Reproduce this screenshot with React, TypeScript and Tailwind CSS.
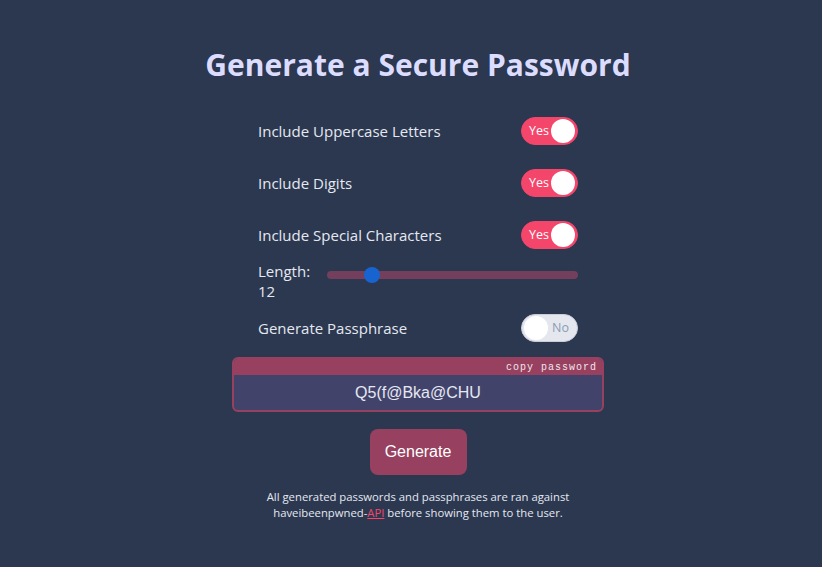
import React, { useState } from "react";

const FONT = { fontFamily: '"Open Sans", "Noto Sans", sans-serif' };

function Toggle({ on, onClick }: { on: boolean; onClick: () => void }) {
  return (
    <button
      onClick={onClick}
      className={`relative flex h-[28px] w-[57px] items-center rounded-full border ${
        on ? "border-[#f4456b] bg-[#f4456b]" : "border-[#c9cdd8] bg-[#e5e7ee]"
      }`}
    >
      {on ? (
        <>
          <span className="ml-[7px] text-[12.5px] leading-none text-white">Yes</span>
          <span className="ml-auto mr-[2px] h-[24px] w-[24px] rounded-full bg-white" />
        </>
      ) : (
        <>
          <span className="ml-[2px] h-[24px] w-[24px] rounded-full bg-white" />
          <span className="ml-auto mr-[8px] text-[12.5px] leading-none text-[#8a9bb5]">No</span>
        </>
      )}
    </button>
  );
}

export default function App() {
  const [upper, setUpper] = useState(true);
  const [digits, setDigits] = useState(true);
  const [special, setSpecial] = useState(true);
  const [phrase, setPhrase] = useState(false);
  const length = 12;
  const min = 6;
  const max = 44;
  const frac = (length - min) / (max - min);

  const rows = [
    { label: "Include Uppercase Letters", on: upper, set: () => setUpper(!upper) },
    { label: "Include Digits", on: digits, set: () => setDigits(!digits) },
    { label: "Include Special Characters", on: special, set: () => setSpecial(!special) },
  ];

  return (
    <div className="min-h-[567px] w-full bg-[#2b3850] text-[#e6e8f0]" style={FONT}>
      <div className="flex flex-col items-center pl-[14px] pt-[43px]">
        <h1 className="text-[30px] font-bold leading-[44px] text-[#dcdcff]">Generate a Secure Password</h1>

        <div className="mt-[30px] flex w-[320px] flex-col">
          {rows.map((r, i) => (
            <div key={r.label} className={`flex h-[28px] items-center justify-between ${i > 0 ? "mt-[24px]" : ""}`}>
              <span className="text-[15px]">{r.label}</span>
              <Toggle on={r.on} onClick={r.set} />
            </div>
          ))}

          <div className="mt-[12px] flex items-start">
            <div className="w-[69px] text-[15px] leading-[20px]">
              Length:
              <br />
              {length}
            </div>
            <div className="relative mt-[10px] h-[8px] flex-1 rounded-full bg-[#733f5d]">
              <span
                className="absolute top-1/2 h-[16px] w-[16px] -translate-x-1/2 -translate-y-1/2 rounded-full bg-[#1764d1]"
                style={{ left: `calc(8px + ${frac} * (100% - 16px))` }}
              />
            </div>
          </div>

          <div className="mt-[13px] flex h-[28px] items-center justify-between">
            <span className="text-[15px]">Generate Passphrase</span>
            <Toggle on={phrase} onClick={() => setPhrase(!phrase)} />
          </div>
        </div>

        <div className="mt-[15px] w-[372px] overflow-hidden rounded-[6px] border-2 border-[#97405f] bg-[#42436a]">
          <div
            className="flex h-[16px] items-center justify-end bg-[#97405f] pr-[5px] text-[10px] tracking-[1px] text-[#f0e6ec]"
            style={{ fontFamily: '"Liberation Mono", "DejaVu Sans Mono", monospace' }}
          >
            copy password
          </div>
          <div
            className="flex h-[35px] items-center justify-center text-[16px] text-[#e6e8f4]"
            style={{ fontFamily: '"Liberation Sans", Arial, sans-serif' }}
          >
            Q5(f@Bka@CHU
          </div>
        </div>

        <button
          className="mt-[17px] h-[46px] w-[97px] rounded-[8px] bg-[#97405f] text-[16px] text-white"
          style={{ fontFamily: '"Liberation Sans", Arial, sans-serif' }}
        >
          Generate
        </button>

        <p className="mt-[14px] text-center text-[11.3px] leading-[16px] text-[#e6e8f0]">
          All generated passwords and passphrases are ran against
          <br />
          haveibeenpwned-
          <a href="#" className="text-[#f4456b] underline">
            API
          </a>{" "}
          before showing them to the user.
        </p>
      </div>
    </div>
  );
}
